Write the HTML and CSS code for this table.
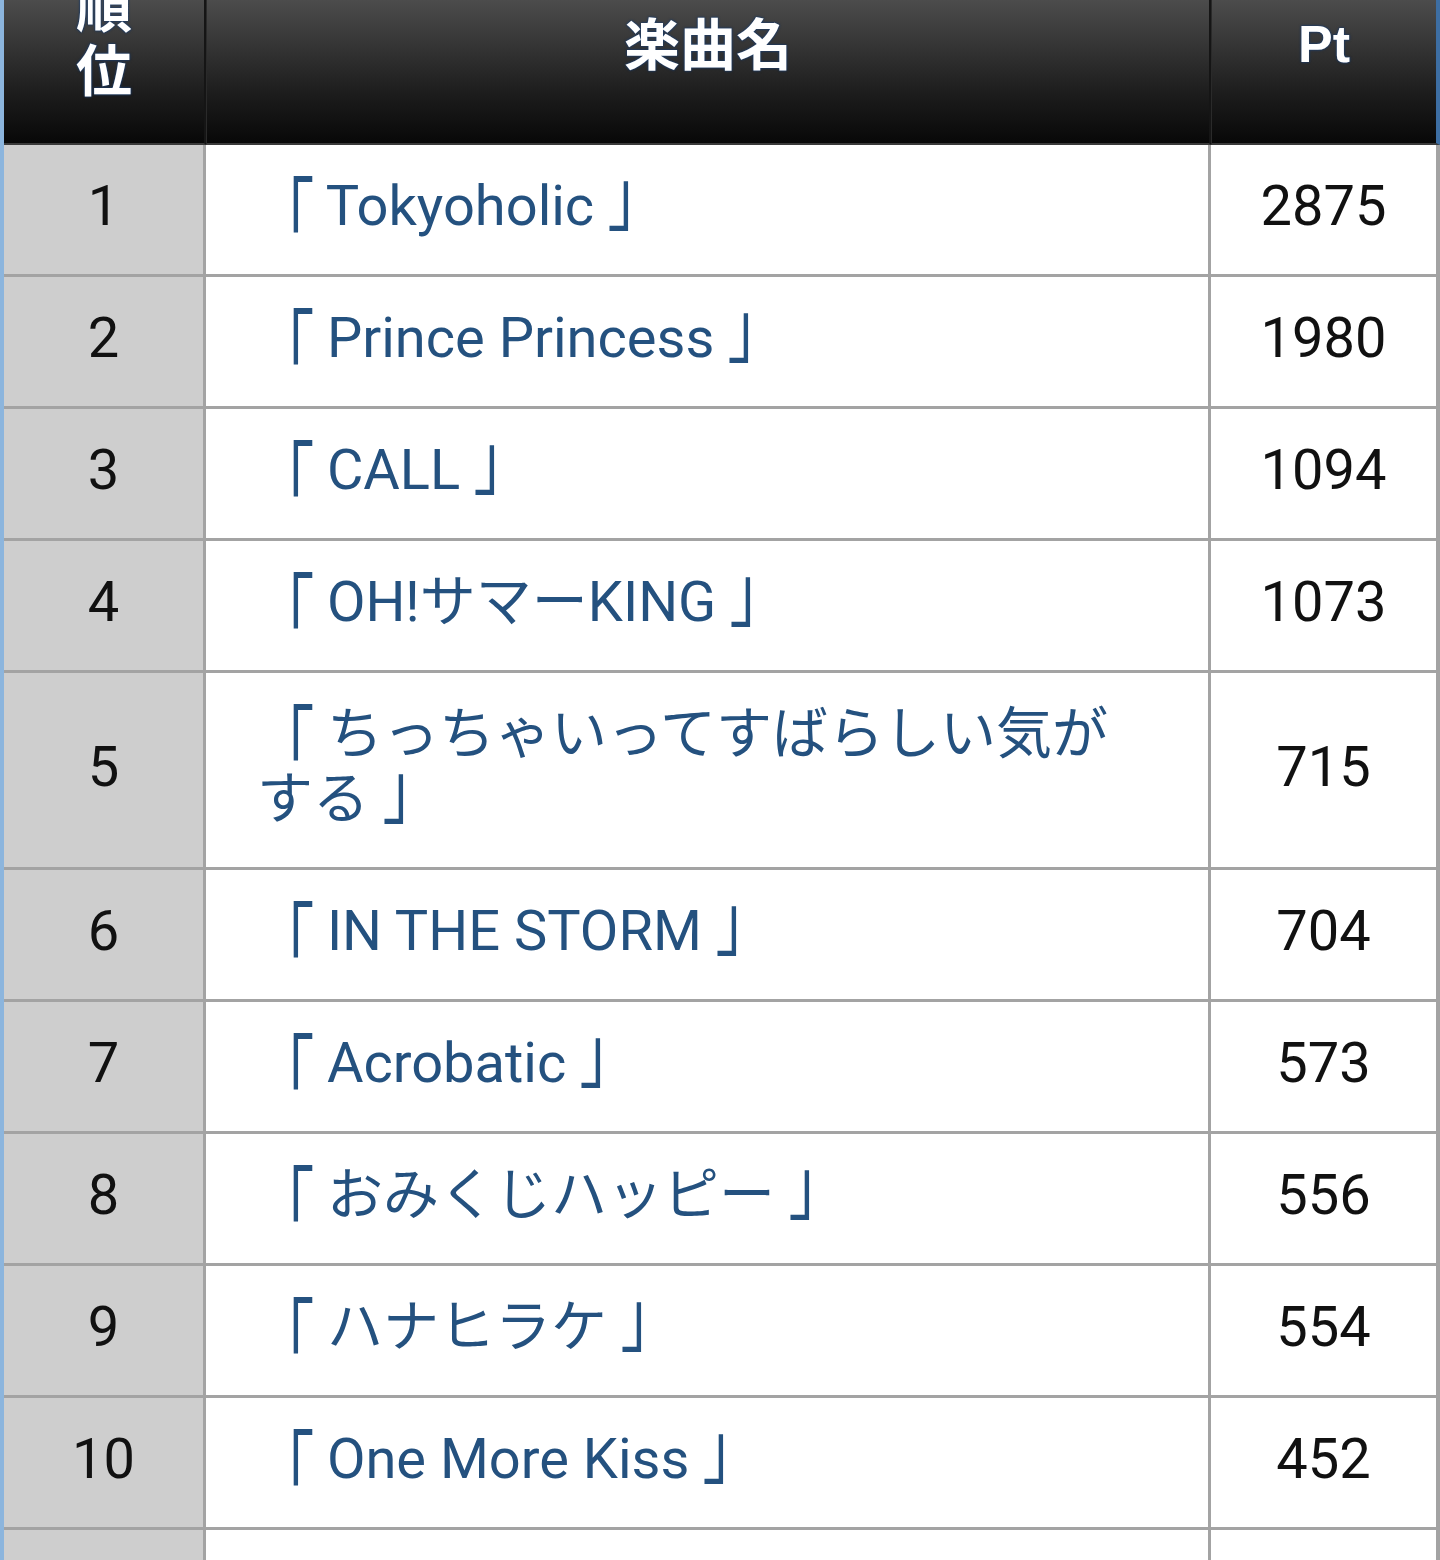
FILE: index.html
```html
<!DOCTYPE html>
<html lang="ja">
<head>
<meta charset="utf-8">
<title>ランキング</title>
<link rel="stylesheet" href="styles.css">
</head>
<body>
<div class="page">
  <div class="frame">
    <table class="rank-table">
      <thead>
        <tr>
          <th class="col-rank head-rank">順<br>位</th>
          <th class="col-title">楽曲名</th>
          <th class="col-pt head-pt">Pt</th>
        </tr>
      </thead>
      <tbody>
        <tr><td class="col-rank">1</td><td class="col-title"><span class="ob">「</span> Tokyoholic <span class="cb">」</span></td><td class="col-pt">2875</td></tr>
        <tr><td class="col-rank">2</td><td class="col-title"><span class="ob">「</span> Prince Princess <span class="cb">」</span></td><td class="col-pt">1980</td></tr>
        <tr><td class="col-rank">3</td><td class="col-title"><span class="ob">「</span> CALL <span class="cb">」</span></td><td class="col-pt">1094</td></tr>
        <tr><td class="col-rank">4</td><td class="col-title"><span class="ob">「</span> OH!サマーKING <span class="cb">」</span></td><td class="col-pt">1073</td></tr>
        <tr><td class="col-rank">5</td><td class="col-title"><span class="ob">「</span> ちっちゃいってすばらしい気がする <span class="cb">」</span></td><td class="col-pt">715</td></tr>
        <tr><td class="col-rank">6</td><td class="col-title"><span class="ob">「</span> IN THE STORM <span class="cb">」</span></td><td class="col-pt">704</td></tr>
        <tr><td class="col-rank">7</td><td class="col-title"><span class="ob">「</span> Acrobatic <span class="cb">」</span></td><td class="col-pt">573</td></tr>
        <tr><td class="col-rank">8</td><td class="col-title"><span class="ob">「</span> おみくじハッピー <span class="cb">」</span></td><td class="col-pt">556</td></tr>
        <tr><td class="col-rank">9</td><td class="col-title"><span class="ob">「</span> ハナヒラケ <span class="cb">」</span></td><td class="col-pt">554</td></tr>
        <tr><td class="col-rank">10</td><td class="col-title"><span class="ob">「</span> One More Kiss <span class="cb">」</span></td><td class="col-pt">452</td></tr>
        <tr><td class="col-rank">&nbsp;</td><td class="col-title">&nbsp;</td><td class="col-pt">&nbsp;</td></tr>
      </tbody>
    </table>
  </div>
</div>
</body>
</html>
```
FILE: styles.css
```css
html, body {
  margin: 0;
  padding: 0;
  background: #ffffff;
}

.page {
  width: 1440px;
  height: 1560px;
  overflow: hidden;
}

.frame {
  margin-top: -51px;
  width: 1436px;
  border-left: 4px solid #8cb5dd;
}

.rank-table {
  width: 1436px;
  border-collapse: separate;
  border-spacing: 0;
  table-layout: fixed;
}

.rank-table th {
  height: 194px;
  padding: 0;
  color: #ffffff;
  font-family: "Liberation Sans", "Noto Sans CJK JP", sans-serif;
  font-weight: bold;
  font-size: 56px;
  line-height: 64px;
  text-align: center;
  vertical-align: middle;
  background: linear-gradient(#6e6e6e 0%, #4a4a4a 28%, #1c1c1c 75%, #080808 100%);
  border-bottom: 2px solid #3a3a3a;
  border-left: 1px solid #2a2a2a;
  border-right: 2px solid #151515;
  text-shadow: 0 0 3px #1c3b66, 0 0 2px #1c3b66, 0 0 1px #1c3b66;
}

.rank-table th.col-rank {
  border-left: 0;
}

.rank-table th.col-pt {
  border-right: 4px solid #3d6ea3;
}

.rank-table th.head-pt {
  font-size: 52px;
  padding-bottom: 4px;
  height: 190px;
}

.rank-table th.head-rank {
  padding-bottom: 12px;
  height: 182px;
}

.col-rank { width: 200px; }
.col-title { width: 1002px; }
.col-pt { width: 224px; }

.rank-table td {
  height: 65px;
  padding: 29px 0 35px;
  line-height: 65px;
  font-family: Roboto, "Noto Sans CJK JP", sans-serif;
  font-size: 56px;
  color: #111111;
  vertical-align: middle;
  border-right: 3px solid #a3a3a3;
  border-bottom: 3px solid #a3a3a3;
}

.rank-table td.col-rank {
  text-align: center;
  background: #cecece;
}

.rank-table td.col-title {
  padding-left: 51px;
  padding-right: 48px;
  color: #24517f;
  text-align: left;
}

.rank-table td.col-pt {
  text-align: center;
  border-right: 4px solid #a3a3a3;
}

.ob,
.cb {
  display: inline-block;
  line-height: 50px;
  font-family: "Noto Sans CJK JP", sans-serif;
}

.ob {
  transform: scale(1.05, 1.55);
  transform-origin: 32px 3px;
}

.cb {
  transform: scale(1.05, 1.35);
  transform-origin: 8px 52px;
}
```
